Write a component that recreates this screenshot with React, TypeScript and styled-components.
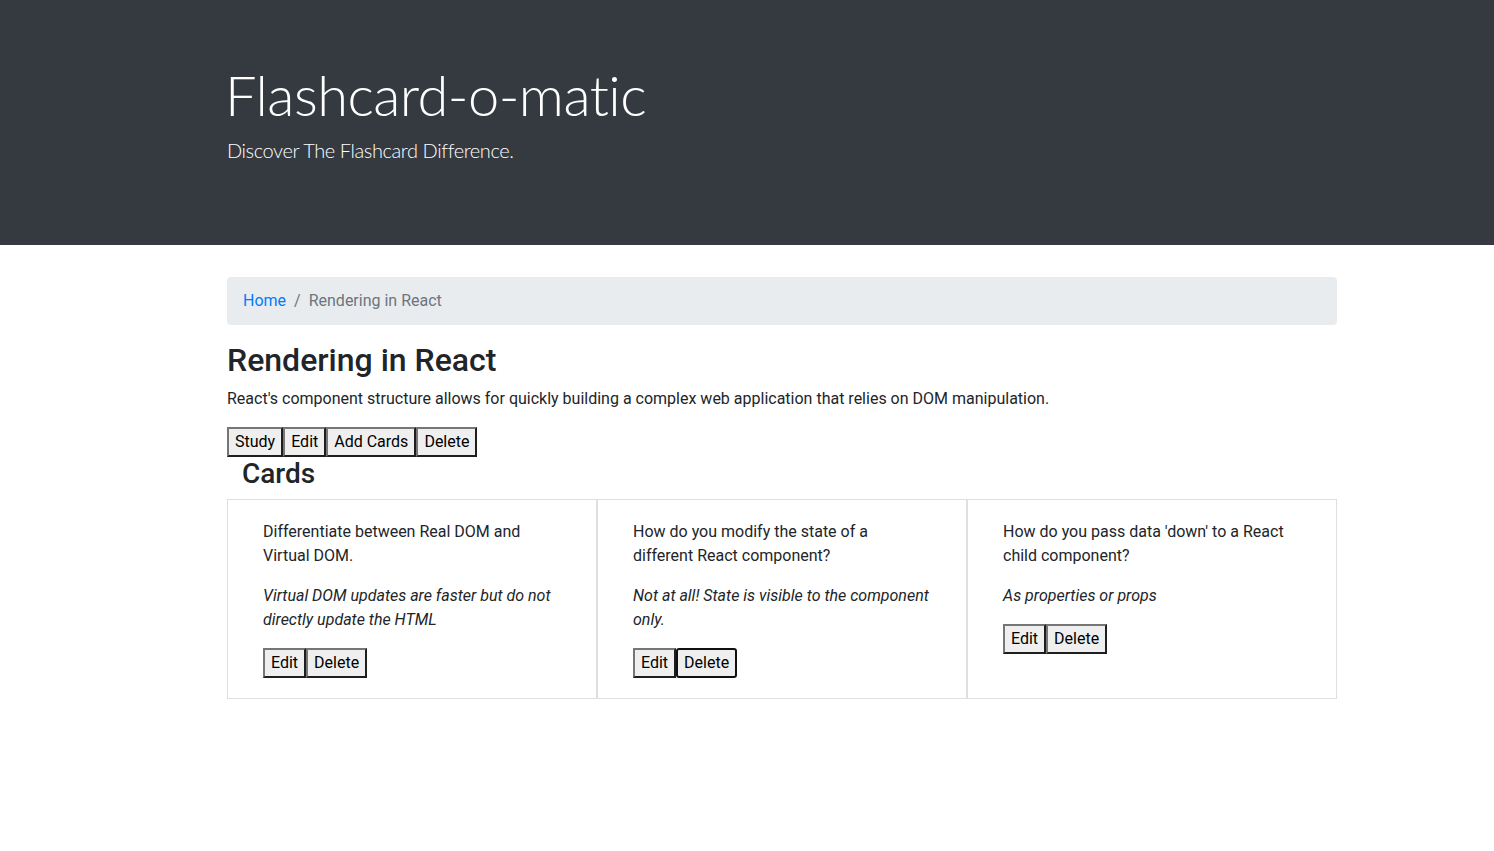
import React from "react";
import styled, { createGlobalStyle } from "styled-components";

const GlobalStyle = createGlobalStyle`
  *, *::before, *::after { box-sizing: border-box; }
  body {
    margin: 0;
    background: #fff;
    color: #212529;
    font-family: Roboto, "Noto Sans", Arial, sans-serif;
    font-size: 16px;
    line-height: 1.5;
  }
`;

const Jumbotron = styled.header`
  background: #343a40;
  color: #fff;
  height: 245px;
  padding-top: 61px;
`;

const Container = styled.div`
  width: 1140px;
  margin-left: 212px;
  padding: 0 15px;
`;

const Display = styled.h1`
  font-family: Lato, "Open Sans", sans-serif;
  font-size: 56px;
  font-weight: 300;
  line-height: 1.2;
  letter-spacing: -0.55px;
  margin: 0 0 7px -2px;
`;

const Lead = styled.p`
  font-family: Lato, Roboto, sans-serif;
  font-size: 20px;
  font-weight: 300;
  line-height: 30px;
  letter-spacing: -0.4px;
  margin: 0;
`;

const Main = styled(Container)`
  margin-top: 32px;
`;

const Breadcrumb = styled.ol`
  display: flex;
  list-style: none;
  margin: 0 0 16px;
  padding: 12px 16px;
  background: #e9ecef;
  border-radius: 4px;

  & > li + li::before {
    content: "/";
    display: inline-block;
    padding: 0 8px;
    color: #6c757d;
  }
`;

const Crumb = styled.li<{ $active?: boolean }>`
  color: ${(p) => (p.$active ? "#6c757d" : "#007bff")};
`;

const CrumbLink = styled.a`
  color: #007bff;
  text-decoration: none;
`;

const Title = styled.h2`
  font-size: 32px;
  font-weight: 500;
  line-height: 1.2;
  margin: 0 0 8px;
`;

const Text = styled.p<{ $italic?: boolean }>`
  margin: 0 0 16px;
  font-style: ${(p) => (p.$italic ? "italic" : "normal")};
`;

const ButtonRow = styled.div`
  display: flex;
`;

const Button = styled.button<{ $focused?: boolean }>`
  font-family: inherit;
  font-size: 16px;
  line-height: 24px;
  padding: 1px 6px;
  background: #efefef;
  color: #000;
  border-width: 2px;
  border-style: solid;
  border-color: ${(p) =>
    p.$focused ? "#101010" : "#767676 #1e1e1e #1e1e1e #767676"};
  border-radius: ${(p) => (p.$focused ? "3px" : "0")};
  cursor: pointer;
`;

const SectionTitle = styled.h3`
  font-size: 28px;
  font-weight: 500;
  line-height: 1.2;
  margin: 0 0 8px;
  padding-left: 15px;
`;

const CardRow = styled.div`
  display: flex;
`;

const Card = styled.div`
  flex: 1 1 0;
  border: 1px solid rgba(0, 0, 0, 0.125);
  padding: 0 15px;
`;

const CardBody = styled.div`
  padding: 20px;
`;

const cards = [
  {
    front: "Differentiate between Real DOM and Virtual DOM.",
    back: "Virtual DOM updates are faster but do not directly update the HTML",
  },
  {
    front: "How do you modify the state of a different React component?",
    back: "Not at all! State is visible to the component only.",
    focused: true,
  },
  {
    front: "How do you pass data 'down' to a React child component?",
    back: "As properties or props",
  },
];

export default function App() {
  return (
    <>
      <GlobalStyle />
      <Jumbotron>
        <Container>
          <Display>Flashcard-o-matic</Display>
          <Lead>Discover The Flashcard Difference.</Lead>
        </Container>
      </Jumbotron>
      <Main>
        <nav>
          <Breadcrumb>
            <Crumb>
              <CrumbLink href="#">Home</CrumbLink>
            </Crumb>
            <Crumb $active>Rendering in React</Crumb>
          </Breadcrumb>
        </nav>
        <Title>Rendering in React</Title>
        <Text>
          React's component structure allows for quickly building a complex web application that relies on DOM
          manipulation.
        </Text>
        <ButtonRow>
          <Button>Study</Button>
          <Button>Edit</Button>
          <Button>Add Cards</Button>
          <Button>Delete</Button>
        </ButtonRow>
        <SectionTitle>Cards</SectionTitle>
        <CardRow>
          {cards.map((c) => (
            <Card key={c.front}>
              <CardBody>
                <Text>{c.front}</Text>
                <Text $italic>{c.back}</Text>
                <ButtonRow>
                  <Button>Edit</Button>
                  <Button $focused={c.focused}>Delete</Button>
                </ButtonRow>
              </CardBody>
            </Card>
          ))}
        </CardRow>
      </Main>
    </>
  );
}
